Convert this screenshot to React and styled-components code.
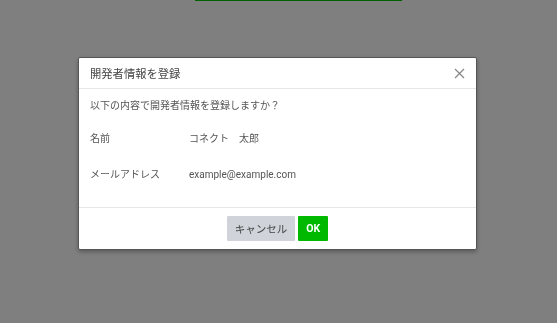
import React from 'react'
import styled, { createGlobalStyle } from 'styled-components'

const GlobalStyle = createGlobalStyle`
  html, body {
    margin: 0;
    padding: 0;
    height: 100%;
    overflow: hidden;
    background: #fff;
    font-family: Roboto, "Noto Sans CJK JP", sans-serif;
  }
`

const Page = styled.div`
  height: 323px;
`

const TopBar = styled.div`
  margin-left: 195px;
  width: 207px;
  height: 1px;
  background: #00c300;
`

const Overlay = styled.div`
  position: fixed;
  inset: 0;
  background: rgba(0, 0, 0, 0.5);
  display: flex;
  justify-content: center;
  align-items: flex-start;
  padding-top: 57px;
  padding-right: 2px;
`

const Modal = styled.div`
  width: 397px;
  background: #fff;
  border: 1px solid #555;
  border-radius: 2px;
  box-shadow: 0 2px 4px rgba(0, 0, 0, 0.3);
`

const Header = styled.div`
  height: 30px;
  display: flex;
  align-items: center;
  justify-content: space-between;
  padding: 0 11px;
  border-bottom: 1px solid #e6e6e6;
`

const Title = styled.h1`
  margin: 0;
  font-size: 11.3px;
  font-weight: 400;
  color: #444;
`

const CloseButton = styled.button`
  border: none;
  background: none;
  padding: 0;
  width: 12px;
  height: 12px;
  display: flex;
  align-items: center;
  justify-content: center;
  cursor: pointer;
`

const Body = styled.div`
  height: 118px;
  box-sizing: border-box;
  padding: 9px 11px 0;
  color: #555;
  font-size: 10px;
`

const Question = styled.p`
  margin: 0 0 5px;
  line-height: 16px;
`

const Row = styled.div`
  display: grid;
  grid-template-columns: 99px 1fr;
  align-items: center;
  height: 36px;
`

const Value = styled.span`
  padding-top: ${p => (p.$low ? '3px' : '0')};
`

const Footer = styled.div`
  border-top: 1px solid #e6e6e6;
  display: flex;
  justify-content: center;
  gap: 3px;
  padding: 8px 0;
`

const Button = styled.button`
  height: 25px;
  padding: 0 8px;
  border: none;
  border-radius: 1px;
  font-family: inherit;
  font-size: 10.5px;
  font-weight: ${p => (p.$primary ? 700 : 400)};
  background: ${p => (p.$primary ? '#00b900' : '#d0d4da')};
  color: ${p => (p.$primary ? '#fff' : '#444')};
  cursor: pointer;
`

const App = () => {
  return (
    <>
      <GlobalStyle />
      <Page>
        <TopBar />
      </Page>
      <Overlay>
        <Modal>
          <Header>
            <Title>開発者情報を登録</Title>
            <CloseButton aria-label='close'>
              <svg width='11' height='11' viewBox='0 0 11 11'>
                <path d='M1 1 L10 10 M10 1 L1 10' stroke='#888' strokeWidth='1.3' fill='none' />
              </svg>
            </CloseButton>
          </Header>
          <Body>
            <Question>以下の内容で開発者情報を登録しますか？</Question>
            <Row>
              <span>名前</span>
              <Value>コネクト　太郎</Value>
            </Row>
            <Row>
              <span>メールアドレス</span>
              <Value $low>example@example.com</Value>
            </Row>
          </Body>
          <Footer>
            <Button>キャンセル</Button>
            <Button $primary>OK</Button>
          </Footer>
        </Modal>
      </Overlay>
    </>
  )
}

export default App
